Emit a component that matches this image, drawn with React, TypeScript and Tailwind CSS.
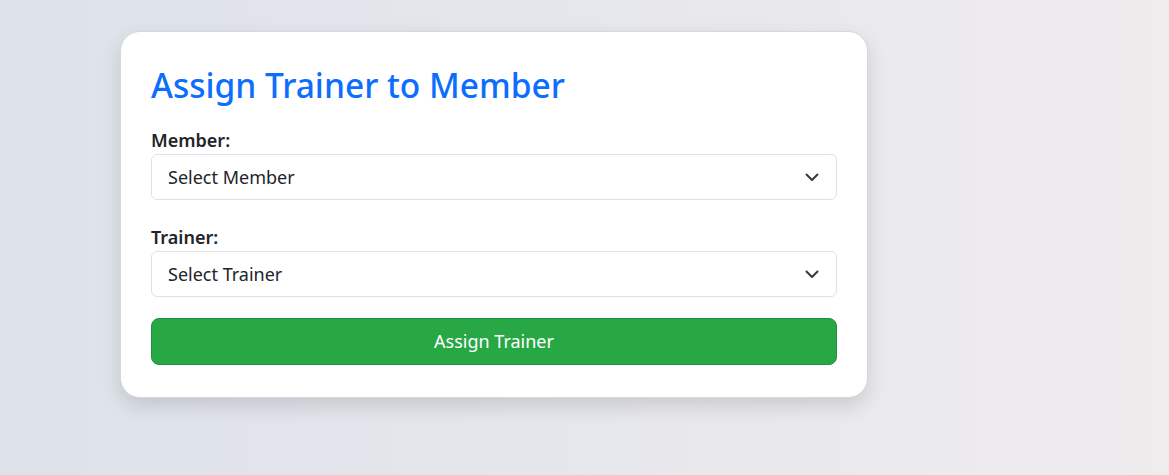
import React, { useState } from 'react';

const ChevronDown = () => (
  <svg width="16" height="16" viewBox="0 0 16 16" fill="none" className="pointer-events-none absolute right-[17px] top-1/2 -translate-y-1/2">
    <path d="M2.5 5.5 8 11l5.5-5.5" stroke="#343a40" strokeWidth="2" strokeLinecap="round" strokeLinejoin="round" />
  </svg>
);

const SelectField = ({ label, placeholder, value, onChange }: { label: string; placeholder: string; value: string; onChange: (v: string) => void }) => (
  <div className="flex flex-col">
    <label className="text-[18px] font-semibold text-[#212529] leading-[27px]">{label}</label>
    <div className="relative">
      <select
        value={value}
        onChange={(e) => onChange(e.target.value)}
        className="w-full h-[46px] appearance-none rounded-[6px] border border-[#dee2e6] bg-white pl-[16px] pr-10 text-[18px] text-[#212529] outline-none"
      >
        <option value="">{placeholder}</option>
      </select>
      <ChevronDown />
    </div>
  </div>
);

export default function App() {
  const [member, setMember] = useState('');
  const [trainer, setTrainer] = useState('');

  return (
    <div
      className="min-h-screen w-full bg-gradient-to-r from-[#dde2ea] to-[#efecee] pt-[31px] pl-[120px]"
      style={{ fontFamily: '"Noto Sans", "Open Sans", sans-serif' }}
    >
      <div className="w-[748px] rounded-[20px] border border-[#d6d8dc] bg-white px-[30px] pt-[32px] pb-[32px] shadow-[0_8px_20px_rgba(0,0,0,0.13)]">
        <h2 className="text-[33.5px] leading-[42px] font-medium text-[#0d6efd] mb-[21px]">Assign Trainer to Member</h2>
        <div className="flex flex-col gap-[24px]">
          <SelectField label="Member:" placeholder="Select Member" value={member} onChange={setMember} />
          <SelectField label="Trainer:" placeholder="Select Trainer" value={trainer} onChange={setTrainer} />
        </div>
        <button className="mt-[21px] w-full h-[47px] rounded-[8px] border border-[#1f8f45] bg-[#28a745] text-[18px] text-white">
          Assign Trainer
        </button>
      </div>
    </div>
  );
}
